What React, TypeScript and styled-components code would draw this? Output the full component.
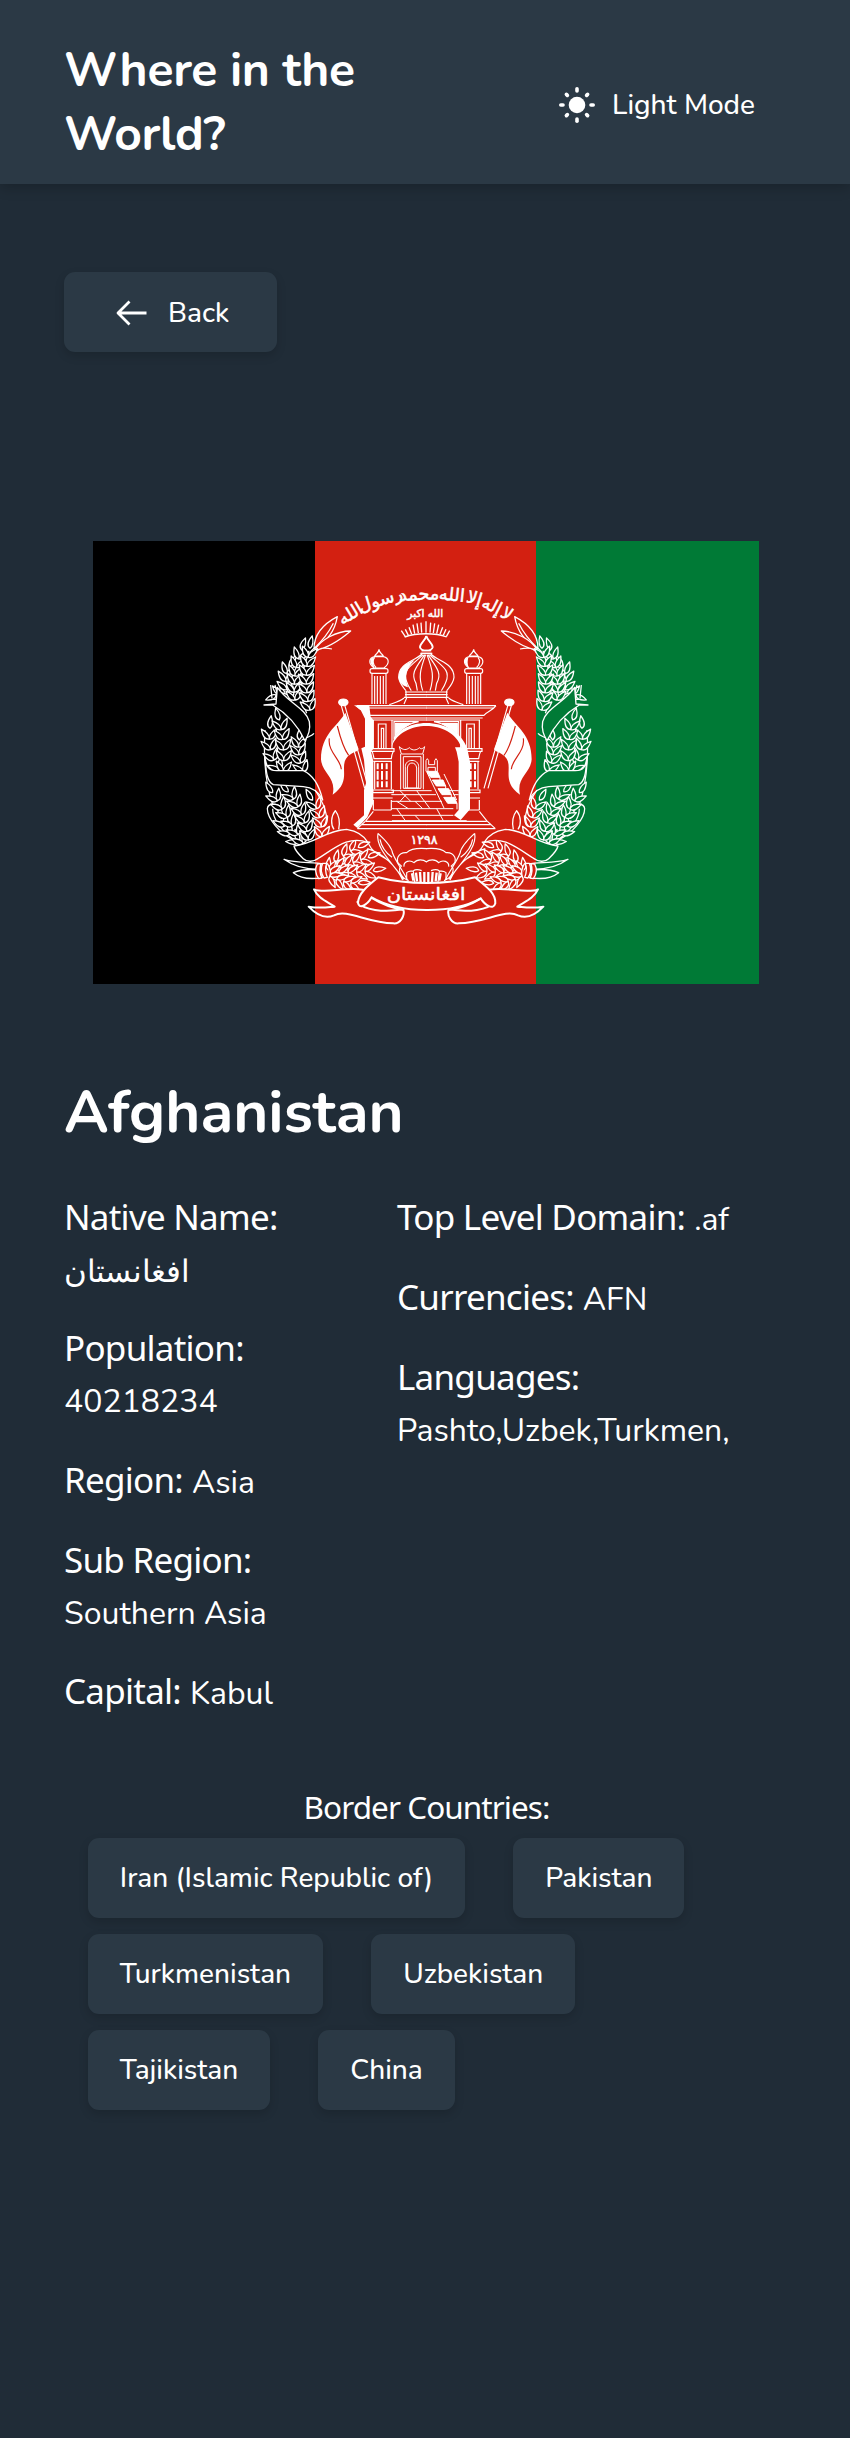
import React from "react";
import styled, { createGlobalStyle } from "styled-components";

const GlobalStyle = createGlobalStyle`
  *, *::before, *::after { box-sizing: border-box; }
  body {
    margin: 0;
    background: #202c37;
    color: #fff;
    font-family: Nunito, Lato, "Noto Sans", sans-serif;
  }
  h1, h2, p { margin: 0; padding: 0; }
`;

const Page = styled.div`
  min-height: 2438px;
  background: #202c37;
`;

const Header = styled.header`
  display: flex;
  align-items: center;
  justify-content: space-between;
  height: 184px;
  padding: 25px 95px 0 64px;
  background: #2b3945;
  box-shadow: 0 4px 12px rgba(0, 0, 0, 0.2);
`;

const SiteTitle = styled.h1`
  width: 320px;
  margin-top: -6px;
  font-size: 48px;
  font-weight: 700;
  line-height: 64px;
  letter-spacing: -0.25px;
`;

const ThemeToggle = styled.button`
  display: flex;
  align-items: center;
  gap: 16px;
  padding: 0;
  border: 0;
  background: none;
  color: inherit;
  font: 500 28px/40px Nunito, Lato, sans-serif;
`;

const SunSvg = styled.svg`
  width: 38px;
  height: 38px;
`;

const Main = styled.main`
  padding: 88px 64px 0;
`;

const Tile = styled.button`
  display: flex;
  align-items: center;
  height: 80px;
  border: 0;
  border-radius: 11px;
  background: #2b3945;
  color: inherit;
  font: 500 28px/40px Nunito, Lato, sans-serif;
  white-space: nowrap;
  box-shadow: 0 4px 10px rgba(0, 0, 0, 0.15);
`;

const BackButton = styled(Tile)`
  width: 213px;
  padding: 2px 0 0 51px;
  gap: 21px;
`;

const BorderButton = styled(Tile)`
  padding: 0 31.8px;
`;

const FlagSvg = styled.svg`
  display: block;
  width: 666px;
  height: 443px;
  margin: 189px 0 0 29px;
`;

const CountryName = styled.h2`
  margin-top: 88px;
  font-size: 60px;
  font-weight: 700;
  line-height: 80px;
`;

const Details = styled.div`
  display: grid;
  grid-template-columns: 250px 350px;
  column-gap: 83px;
  margin-top: 39px;
`;

const Facts = styled.div`
  display: flex;
  flex-direction: column;
  gap: 28px;
`;

const Fact = styled.p<{ $stacked?: boolean }>`
  display: flex;
  flex-direction: ${(p) => (p.$stacked ? "column" : "row")};
  align-items: baseline;
  column-gap: 9px;
  height: ${(p) => (p.$stacked ? 103.3 : 52)}px;
  line-height: 52px;
  white-space: nowrap;
`;

const Label = styled.span`
  font-family: "Noto Sans", sans-serif;
  font-size: 35px;
  letter-spacing: -0.75px;
`;

const Value = styled.span`
  font-size: 32px;
  padding-top: 2px;
`;

const NativeValue = styled.span`
  font-size: 31px;
  padding-top: 3px;
`;

const Borders = styled.section`
  margin-top: 66px;
`;

const BordersTitle = styled.p`
  font-family: "Noto Sans", sans-serif;
  font-size: 31.5px;
  line-height: 48px;
  letter-spacing: -0.95px;
  text-align: center;
  padding-left: 3px;
`;

const BorderList = styled.div`
  display: flex;
  flex-wrap: wrap;
  gap: 16px 48.5px;
  margin: 7px 24px 0;
  padding-right: 30px;
`;

function SunIcon() {
  return (
    <SunSvg viewBox="0 0 38 38" fill="#fff" stroke="#fff" strokeWidth="3.6" strokeLinecap="round">
      <circle cx="19" cy="19" r="8.3" stroke="none" />
      {[0, 45, 90, 135, 180, 225, 270, 315].map((a) => (
        <path key={a} d={a % 90 ? "M19 5.4v-1.4" : "M19 5v-2.2"} transform={`rotate(${a} 19 19)`} />
      ))}
    </SunSvg>
  );
}

function ArrowIcon() {
  return (
    <svg width="32" height="26" viewBox="0 0 32 26" fill="none" stroke="#fff" strokeWidth="2.8">
      <path d="M14.5 1.5L3 13L14.5 24.5M3 13H31.5" strokeLinejoin="round" />
    </svg>
  );
}

/* One ear of wheat: paired grains along a quadratic stem, tip grain last. */
type EarProps = { p: number[]; n: number; s?: number; fill?: string };
function Ear({ p, n, s = 1, fill }: EarProps) {
  const [x0, y0, cx, cy, x1, y1] = p;
  const grain = `M0 0C${6 * s} ${-12 * s} ${18 * s} ${-12 * s} ${38 * s} ${-2 * s}C${22 * s} ${6 * s} ${8 * s} ${7 * s} 0 0Z`;
  const items: React.ReactNode[] = [];
  for (let i = 0; i <= n; i++) {
    const t = i / n;
    const u = 1 - t;
    const x = u * u * x0 + 2 * u * t * cx + t * t * x1;
    const y = u * u * y0 + 2 * u * t * cy + t * t * y1;
    const a = (Math.atan2(2 * u * (cy - y0) + 2 * t * (y1 - cy), 2 * u * (cx - x0) + 2 * t * (x1 - cx)) * 180) / Math.PI;
    if (i === n) {
      items.push(<path key="tip" d={grain} transform={`translate(${x} ${y}) rotate(${a})`} />);
    } else {
      items.push(<path key={`l${i}`} d={grain} transform={`translate(${x} ${y}) rotate(${a - 34})`} />);
      items.push(<path key={`r${i}`} d={grain} transform={`translate(${x} ${y}) rotate(${a + 34}) scale(1 -1)`} />);
    }
  }
  return <g fill={fill}>{items}</g>;
}

const RED = "#d32011";

const EARS: EarProps[] = [
  { p: [150, 395, 120, 370, 108, 375], n: 3, s: 0.9 },
  { p: [150, 385, 125, 330, 150, 290], n: 4 },
  { p: [165, 390, 155, 320, 185, 240], n: 6 },
  { p: [210, 420, 188, 330, 210, 235], n: 7 },
  { p: [118, 600, 80, 540, 90, 475], n: 4 },
  { p: [130, 605, 135, 520, 118, 450], n: 5 },
  { p: [190, 605, 170, 550, 178, 510], n: 4 },
  { p: [175, 815, 130, 780, 125, 745], n: 3 },
  { p: [190, 820, 140, 740, 98, 668], n: 6 },
  { p: [205, 810, 195, 730, 145, 665], n: 6 },
  { p: [246, 800, 245, 740, 218, 690], n: 4, fill: "none" },
  { p: [265, 900, 310, 850, 355, 832], n: 4, fill: RED },
  { p: [268, 905, 330, 880, 385, 862], n: 5, fill: RED },
  { p: [270, 910, 340, 910, 400, 902], n: 5, fill: RED },
  { p: [270, 918, 310, 940, 355, 940], n: 4, fill: RED },
];

function Wreath({ fill }: { fill: string }) {
  return (
    <g fill={fill} stroke="#fff" strokeWidth="3.8" strokeLinejoin="round">
      <path d="M200 430C170 360 190 260 222 235M100 710C75 640 70 560 75 480" fill="none" />
      <path d="M165 812C118 790 82 745 82 716C84 698 112 700 122 712M160 808C122 780 98 745 98 716" fill="none" />
      <path d="M292 140C250 162 222 195 222 236C262 215 285 180 292 140ZM280 160C265 190 250 210 222 236" />
      <path d="M332 183C290 183 240 210 225 240C265 235 300 210 332 183ZM276 237C250 231 232 236 226 250" />
      {EARS.map((e, i) => (
        <Ear key={i} {...e} />
      ))}
      <path d="M190 510C200 500 215 500 222 490M92 345L96 385M105 345L114 380" />
      <path d="M72 405L108 402L112 352C140 395 198 415 208 455C212 480 205 495 195 512C175 470 140 430 98 405Z" strokeWidth="4" />
      <path d="M75 564C80 590 85 602 110 602L190 602C225 618 240 655 248 690C235 662 215 652 190 650L100 644C80 636 78 600 75 564Z" strokeWidth="4" />
      <path d="M225 660C245 690 275 745 250 770M296 778C302 750 296 735 286 722C272 740 272 765 282 778" fill="none" />
      <path d="M162 828C225 822 260 780 320 778C345 782 372 795 384 818C330 796 290 830 240 862C220 878 200 876 190 866C175 852 165 842 162 828Z" strokeWidth="4" />
      <path d="M132 868C170 880 210 876 252 882L248 898C205 900 165 892 132 868ZM160 908C190 896 215 896 250 902L250 922C220 928 185 928 160 908Z" strokeWidth="4" />
      <path d="M232 882C225 895 226 912 236 926L246 924C238 908 238 896 243 881ZM248 880C242 894 244 912 252 924L262 922C256 908 255 894 260 880ZM262 880C270 892 274 908 268 924" strokeWidth="4" />
      <path d="M222 958C262 975 330 942 392 966L352 996C370 1020 430 1028 490 1018C496 1038 480 1062 460 1060C380 1058 320 1016 282 1036C250 1050 225 1030 206 1010C240 1016 260 1012 284 1010C260 994 235 986 222 958Z" strokeWidth="6" />
    </g>
  );
}

/* Half of the mosque, with the national flag and leaves beside it. */
function MosqueHalf() {
  return (
    <g fill="none" stroke="#fff" strokeWidth="3.5">
      <path d="M302 400L374 655M312 398L386 655" />
      <ellipse cx="310" cy="397" rx="14" ry="10" fill="#fff" />
      <path d="M316 428C292 470 243 492 243 568C246 610 290 622 278 674C334 634 300 596 318 566C334 545 350 548 356 538Z" fill="#fff" stroke="none" />
      <path d="M292 468C300 500 310 535 326 556M268 505C262 545 304 570 304 598" stroke={RED} />
      <path d="M396 312V402M404 318V402M412 318V402M421 318V402M430 318V402M438 312V402" />
      <rect x="390" y="296" width="54" height="14" rx="6" />
      <path d="M402 294C384 280 386 264 404 260H430C448 264 450 280 432 294ZM404 258C408 250 416 250 417 238C418 250 426 250 430 258ZM404 262C396 272 400 284 408 292" />
      <path d="M560 198C556 214 540 220 541 232C544 244 576 244 579 232C580 220 564 214 560 198M546 242H574M543 250H577" />
      <path d="M546 252C520 276 476 280 476 322C478 340 490 352 498 362M550 254C510 290 486 300 500 335C504 348 510 356 514 362M554 254C530 290 510 310 528 340L532 362M557 254C540 300 535 320 548 362" />
      <path d="M495 366H560M495 374H560M492 382H560M498 362V382M492 384C480 394 465 398 448 404M500 384L492 402" />
      <path d="M350 407H560M358 414H560M386 436H560M390 444H560M398 450H560M350 407C360 422 380 426 386 436" />
      <path d="M400 450V536M456 450V536M415 536V462H438V536M424 536V475H431V536" />
      <path d="M462 455H536C500 462 476 480 462 508Z" />
      <path d="M466 461H512C490 470 476 482 466 496Z" fill="#fff" />
      <path d="M392 536H462V544H392ZM396 544C400 552 400 556 402 566H454C454 556 456 552 460 544M400 574H456M404 574V658M454 574V658" />
      <path d="M413 580V654M426 580V654M440 580V654" strokeWidth="6" strokeDasharray="18 5 26 5" />
      <path d="M398 660H460V668H398ZM398 684H458M400 690V720M454 690V720M400 720H454M400 724L378 752L352 776M352 776H560M366 764H560M378 754H560" />
      <path d="M414 790C406 828 445 868 492 928M414 790C438 812 456 832 458 850C470 880 488 900 502 930M440 868C410 852 396 844 386 822M382 836C430 850 470 890 488 930M420 808C424 830 440 850 456 862" />
      <path d="M506 932C486 926 470 900 484 888C460 872 476 846 500 848C512 836 536 834 560 836M492 890C490 874 510 868 522 878C532 866 550 868 560 876M500 928V908C510 900 516 904 520 904L524 936M520 902C530 896 540 900 545 902" />
      <path d="M516 910L520 932M528 908L531 934M540 906L542 936M553 906V938" strokeWidth="7" />
    </g>
  );
}

const CREED: [string, number, number, number][] = [
  ["لا", 790, 146, 35],
  ["إله", 748, 122, 27],
  ["إلا", 698, 102, 17],
  ["الله", 634, 92, 6],
  ["محمد", 538, 90, -3],
  ["رسول", 426, 106, -17],
  ["الله", 340, 146, -31],
];

const STEPS = [0, 1, 2, 3];

function Flag() {
  return (
    <FlagSvg viewBox="93 541 666 443" role="img" aria-label="Flag of Afghanistan">
      <defs>
        <linearGradient id="leftBands" gradientUnits="userSpaceOnUse" x1="0" y1="0" x2="448" y2="0">
          <stop offset="0.5" stopColor="#000" />
          <stop offset="0.5" stopColor={RED} />
        </linearGradient>
        <linearGradient id="rightBands" gradientUnits="userSpaceOnUse" x1="0" y1="0" x2="456" y2="0">
          <stop offset="0.5" stopColor="#007a36" />
          <stop offset="0.5" stopColor={RED} />
        </linearGradient>
      </defs>
      <rect x="93" y="541" width="222" height="443" fill="#000" />
      <rect x="315" y="541" width="221" height="443" fill={RED} />
      <rect x="536" y="541" width="223" height="443" fill="#007a36" />
      <g transform="translate(240 570) scale(0.33333)">
        <Wreath fill="url(#leftBands)" />
        <g transform="translate(1116 0) scale(-1 1)">
          <Wreath fill="url(#rightBands)" />
        </g>
        <MosqueHalf />
        <g transform="translate(1118 0) scale(-1 1)">
          <MosqueHalf />
        </g>
        <g fill="#fff">
          <path d="M342 406L388 408L392 440L400 450V536L393 545L400 574V700L382 742L352 774L340 764L372 736V660L378 640L372 570L364 535L375 530V446L362 420Z" />
          <path d="M455 530C466 436 648 432 682 536L690 575V718L662 750L642 736L656 720V575L650 545L645 532H664C634 448 486 446 455 530Z" />
          <path d="M476 325C476 290 500 280 524 270C500 294 492 318 504 352C490 348 478 340 476 325Z" />
          <path d="M393 266C388 276 394 288 404 293C398 282 400 272 402 262ZM676 266C671 276 677 288 687 293C681 282 683 272 685 262Z" />
        </g>
        <g fill="none" stroke="#fff" strokeWidth="3">
          <path d="M478 530C490 542 500 540 508 533C518 544 532 540 538 533C544 540 550 534 554 530L548 552H484ZM482 552V658M550 552V658M490 560H543V655H490ZM496 654V590C496 565 536 565 536 590V654ZM502 654V594C504 574 528 574 530 594V654" />
          <path d="M558 604V572L562 566L566 572V584H584V572L588 566L592 572V604M564 604V592H586V604" />
          <path d="M454 662H575M454 674H588M454 694H606M454 716H640M456 736H640M456 752H680M480 662L512 694M530 662L570 716M498 674L480 694M470 694L505 716M525 694L548 716M470 716L496 752M525 736L540 752M590 716L610 752M630 662H656M640 674H656" />
          <path d="M560 605L612 714M612 612L650 690" />
        </g>
        {STEPS.map((i) => (
          <path
            key={i}
            d="M560 604H592L600 622H572Z M600 622V640"
            transform={`translate(${i * 17} ${i * 26})`}
            fill="#fff"
            stroke="#fff"
            strokeWidth="3"
          />
        ))}
        <path d="M484 182L496 200M496 178L505 196M507 172L515 193M519 164L524 191M531 160L535 189M543 158L545 188M558 154V188M572 158L570 188M584 160L580 189M596 164L590 191M608 172L600 193M618 178L610 196M629 182L619 200" stroke="#fff" strokeWidth="4" />
        <path d="M494 201C530 188 586 188 620 201" fill="none" stroke="#fff" strokeWidth="4" />
        <path d="M415 922C500 945 620 945 705 922C740 950 768 970 766 1000C760 1022 735 1005 722 985C640 1032 480 1032 395 982C380 1008 356 1018 354 998C356 970 380 950 415 922Z" fill={RED} stroke="#fff" strokeWidth="6" />
        <path d="M395 984C430 1006 465 1016 492 1020M722 986C690 1006 655 1016 626 1020" fill="none" stroke="#fff" strokeWidth="6" />
        <g fill="#fff" fontFamily='"DejaVu Sans", sans-serif' stroke="#fff" strokeWidth="1.5" textAnchor="middle">
          {CREED.map(([word, x, y, angle]) => (
            <text key={`${word}${x}`} fontSize="53" transform={`translate(${x} ${y}) rotate(${angle})`}>{word}</text>
          ))}
          <text x="556" y="142" fontSize="32">الله اکبر</text>
          <text x="552" y="822" fontSize="38">۱۲۹۸</text>
          <text x="558" y="990" fontSize="50" textLength="236" lengthAdjust="spacingAndGlyphs">افغانستان</text>
        </g>
      </g>
    </FlagSvg>
  );
}

const BORDERS = ["Iran (Islamic Republic of)", "Pakistan", "Turkmenistan", "Uzbekistan", "Tajikistan", "China"];

export default function App() {
  return (
    <Page>
      <GlobalStyle />
      <Header>
        <SiteTitle>Where in the World?</SiteTitle>
        <ThemeToggle>
          <SunIcon />
          Light Mode
        </ThemeToggle>
      </Header>
      <Main>
        <BackButton>
          <ArrowIcon />
          Back
        </BackButton>
        <Flag />
        <CountryName>Afghanistan</CountryName>
        <Details>
          <Facts>
            <Fact $stacked>
              <Label>Native Name:</Label>
              <NativeValue>افغانستان</NativeValue>
            </Fact>
            <Fact $stacked>
              <Label>Population:</Label>
              <Value>40218234</Value>
            </Fact>
            <Fact>
              <Label>Region:</Label>
              <Value>Asia</Value>
            </Fact>
            <Fact $stacked>
              <Label>Sub Region:</Label>
              <Value>Southern Asia</Value>
            </Fact>
            <Fact>
              <Label>Capital:</Label>
              <Value>Kabul</Value>
            </Fact>
          </Facts>
          <Facts>
            <Fact>
              <Label>Top Level Domain:</Label>
              <Value>.af</Value>
            </Fact>
            <Fact>
              <Label>Currencies:</Label>
              <Value>AFN</Value>
            </Fact>
            <Fact $stacked>
              <Label>Languages:</Label>
              <Value>Pashto,Uzbek,Turkmen,</Value>
            </Fact>
          </Facts>
        </Details>
        <Borders>
          <BordersTitle>Border Countries:</BordersTitle>
          <BorderList>
            {BORDERS.map((name) => (
              <BorderButton key={name}>{name}</BorderButton>
            ))}
          </BorderList>
        </Borders>
      </Main>
    </Page>
  );
}
